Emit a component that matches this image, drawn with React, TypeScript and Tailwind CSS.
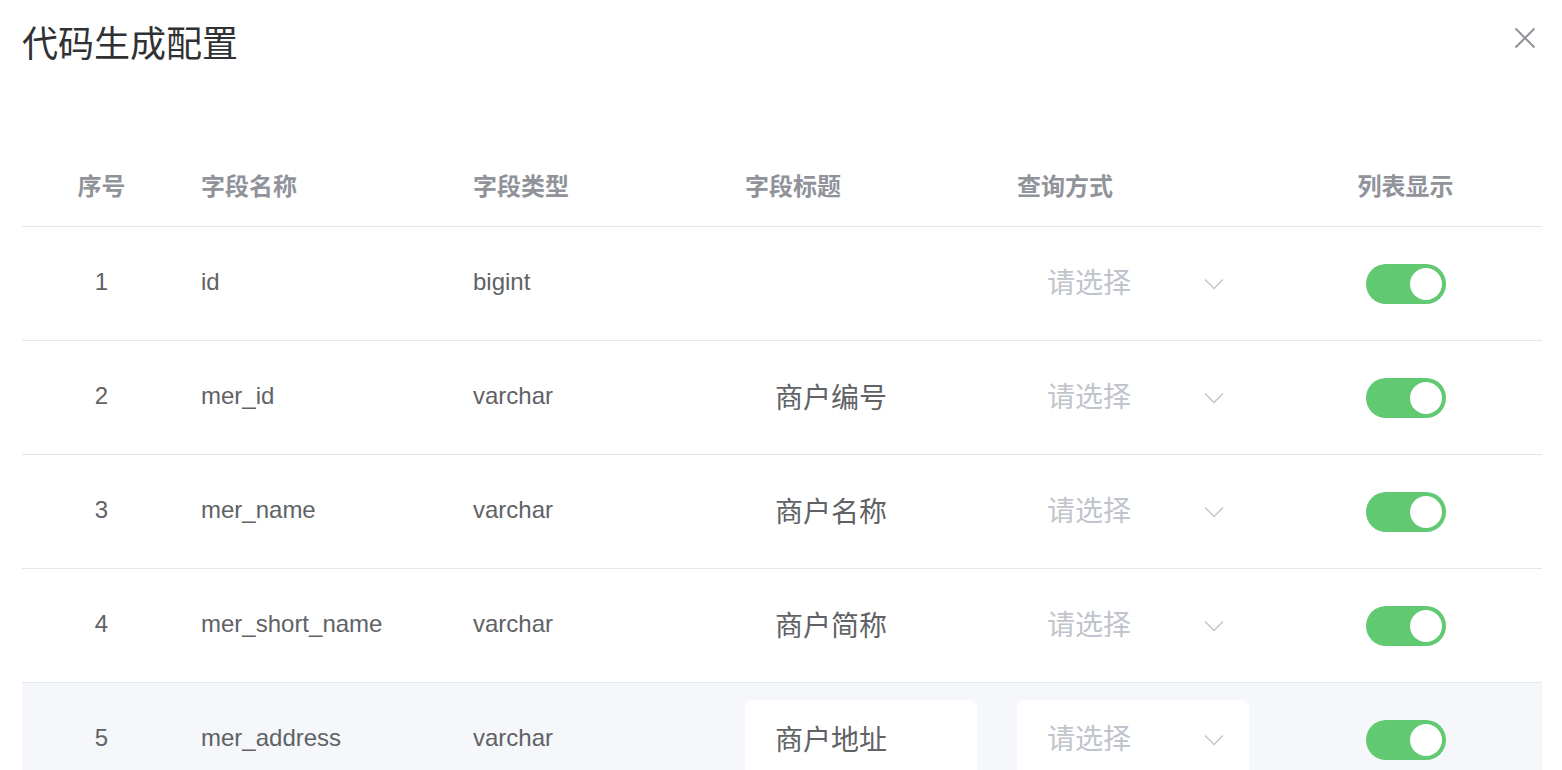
import * as React from "react";

interface FieldRow {
  index: number;
  name: string;
  type: string;
  label: string;
}

const rows: FieldRow[] = [
  { index: 1, name: "id", type: "bigint", label: "" },
  { index: 2, name: "mer_id", type: "varchar", label: "商户编号" },
  { index: 3, name: "mer_name", type: "varchar", label: "商户名称" },
  { index: 4, name: "mer_short_name", type: "varchar", label: "商户简称" },
  { index: 5, name: "mer_address", type: "varchar", label: "商户地址" },
];

const font = "font-['Liberation_Sans','Noto_Sans_CJK_SC',sans-serif]";

function ChevronDown() {
  return (
    <svg width="22" height="14" viewBox="0 0 22 14" fill="none">
      <polyline
        points="2,2.5 11,11.5 20,2.5"
        stroke="#c0c4cc"
        strokeWidth="1.4"
        strokeLinejoin="round"
      />
    </svg>
  );
}

function Toggle() {
  return (
    <div className="flex items-center justify-end w-[80px] h-[40px] rounded-full bg-[#61c971] pr-[4px]">
      <div className="w-[32px] h-[32px] rounded-full bg-white" />
    </div>
  );
}

function TableRow({ row, hover }: { row: FieldRow; hover?: boolean }) {
  return (
    <div
      className={`flex h-[114px] border-b border-[#e3e8ee] text-[24px] text-[#606266] ${
        hover ? "bg-[#f5f7fa]" : ""
      }`}
    >
      <div className="w-[159px] flex items-center justify-center pb-[4px]">{row.index}</div>
      <div className="w-[272px] flex items-center px-[20px] pb-[4px]">{row.name}</div>
      <div className="w-[272px] flex items-center px-[20px] pb-[4px]">{row.type}</div>
      <div className="w-[272px] flex items-center px-[20px]">
        <div className="w-[232px] h-[80px] flex items-center px-[30px] pt-[2px] bg-white rounded-lg text-[28px] text-[#606266]">
          {row.label}
        </div>
      </div>
      <div className="w-[272px] flex items-center px-[20px]">
        <div className="w-[232px] h-[80px] flex items-center justify-between pl-[30px] pr-[24px] bg-white rounded-lg text-[28px] text-[#c0c4cc]">
          <span>请选择</span>
          <ChevronDown />
        </div>
      </div>
      <div className="w-[273px] flex items-center justify-center">
        <Toggle />
      </div>
    </div>
  );
}

export default function App() {
  return (
    <div className={`w-[1562px] h-[770px] bg-white overflow-hidden ${font}`}>
      <div className="flex items-center justify-between h-[90px] pl-[22px] pr-[26px]">
        <h1 className="text-[36px] text-[#303133] leading-none">代码生成配置</h1>
        <svg width="22" height="22" viewBox="0 0 22 22" className="-mt-[14px]">
          <path d="M1.5 1.5 L20.5 20.5 M20.5 1.5 L1.5 20.5" stroke="#909399" strokeWidth="2" />
        </svg>
      </div>

      <div className="mt-[57px] mx-[22px] w-[1520px]">
        <div className="flex h-[80px] border-b border-[#e3e8ee] text-[24px] font-bold text-[#909399]">
          <div className="w-[159px] flex items-center justify-center">序号</div>
          <div className="w-[272px] flex items-center px-[20px]">字段名称</div>
          <div className="w-[272px] flex items-center px-[20px]">字段类型</div>
          <div className="w-[272px] flex items-center px-[20px]">字段标题</div>
          <div className="w-[272px] flex items-center px-[20px]">查询方式</div>
          <div className="w-[273px] flex items-center justify-center">列表显示</div>
        </div>
        {rows.map((row) => (
          <TableRow key={row.index} row={row} hover={row.index === 5} />
        ))}
      </div>
    </div>
  );
}
